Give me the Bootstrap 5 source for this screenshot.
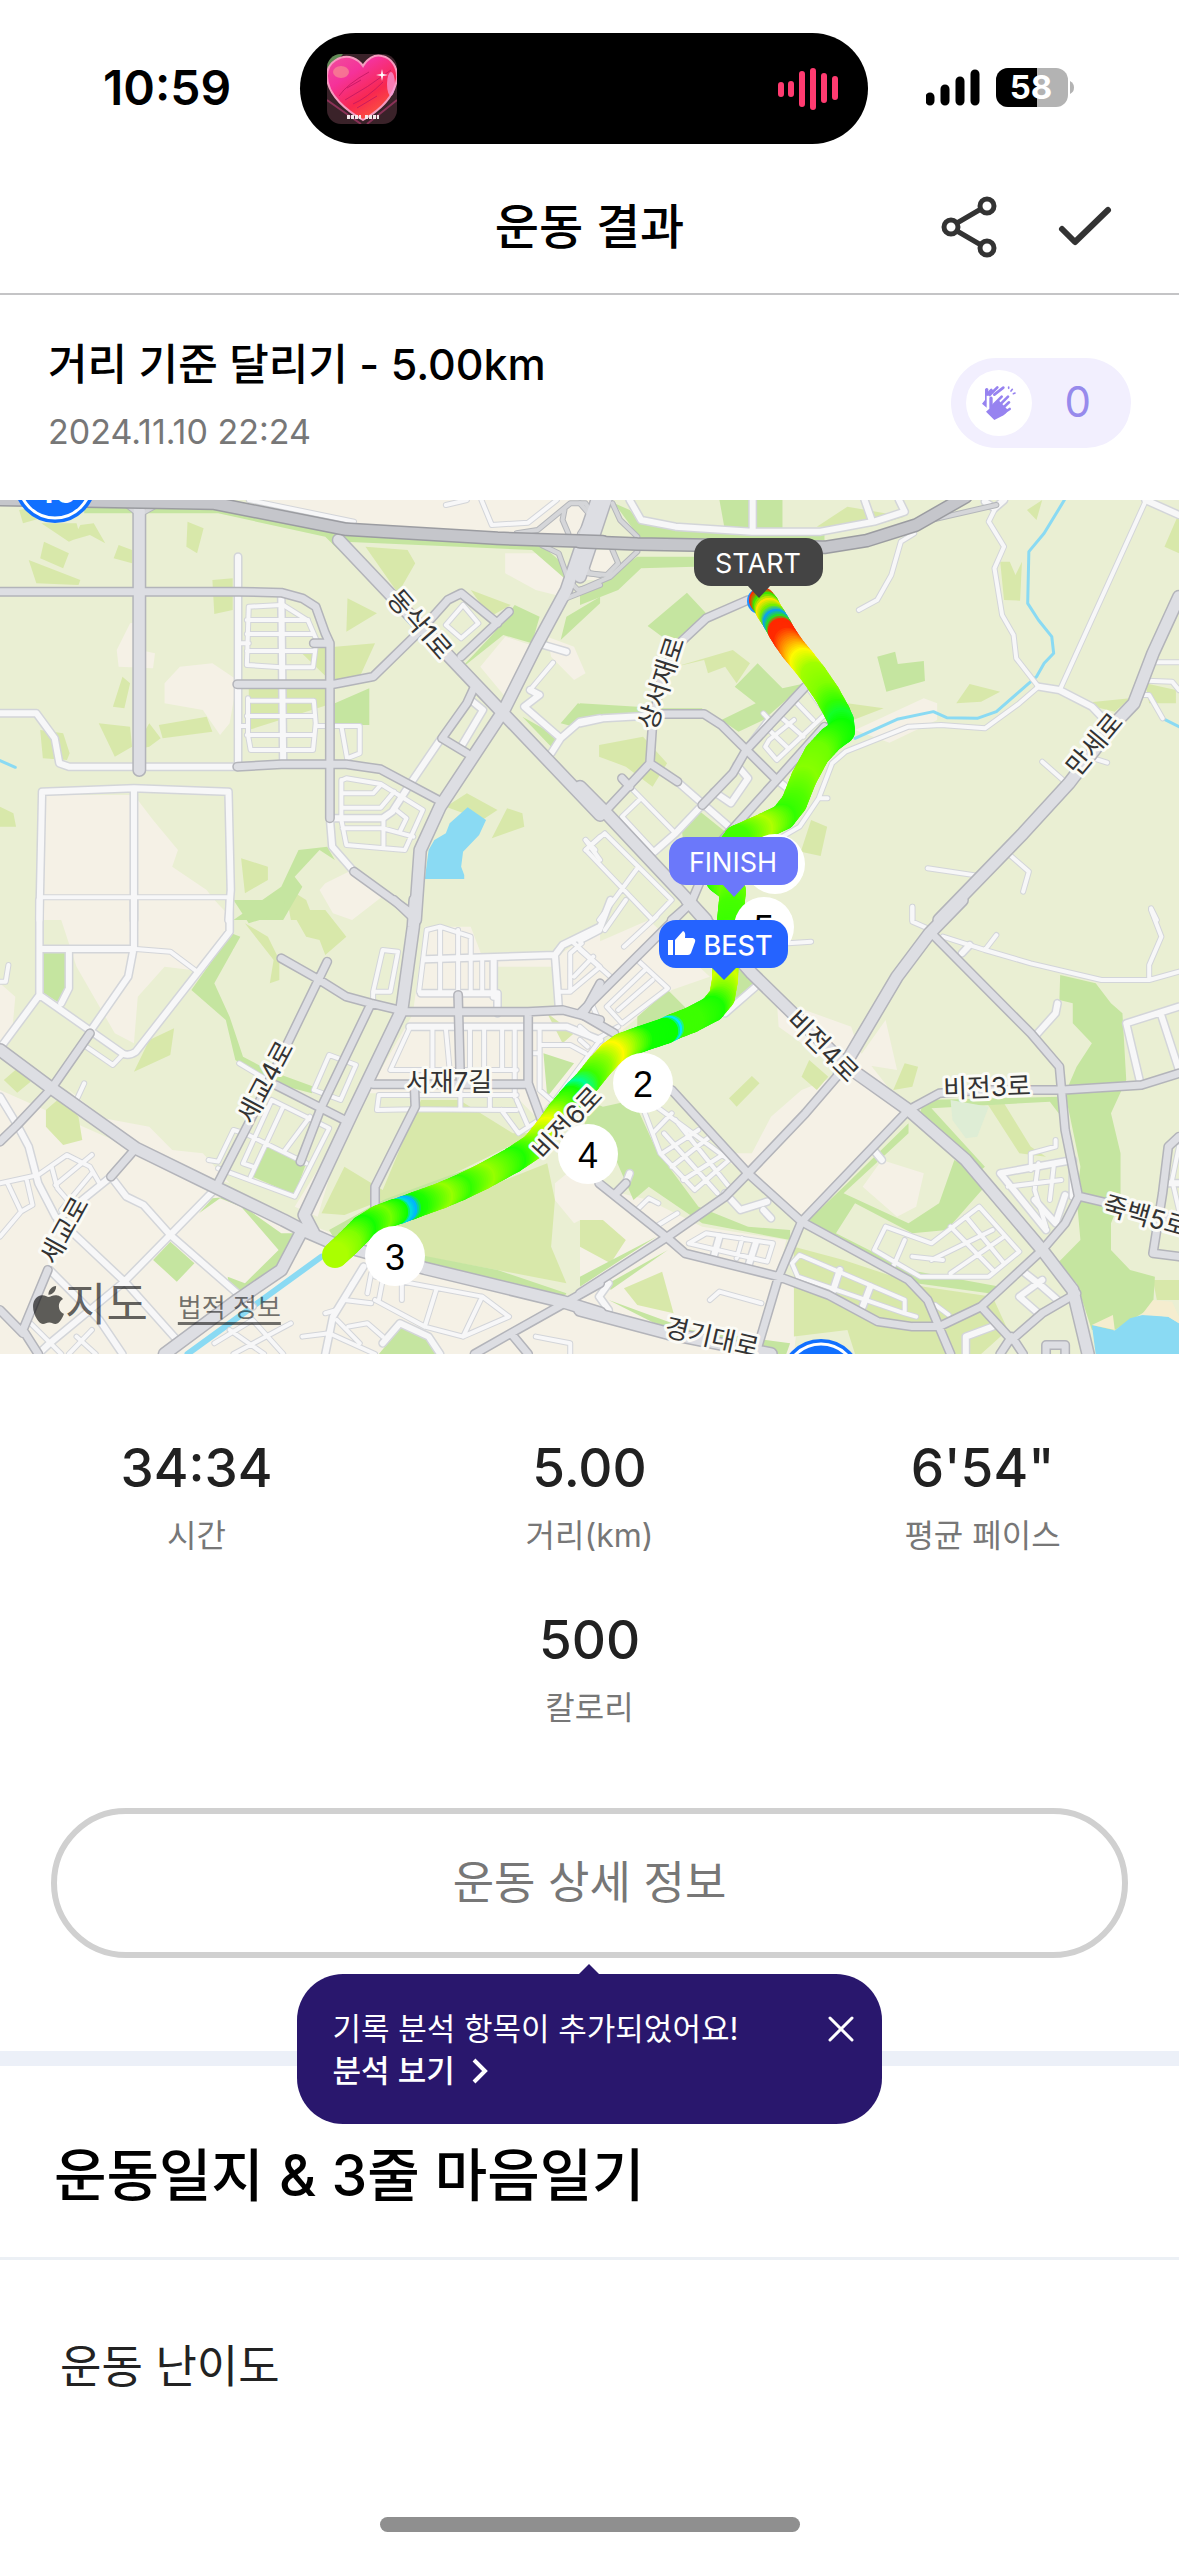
<!DOCTYPE html>
<html lang="ko">
<head>
<meta charset="utf-8">
<meta name="viewport" content="width=device-width, initial-scale=1">
<title>운동 결과</title>
<link href="https://cdn.jsdelivr.net/npm/bootstrap@5.3.0/dist/css/bootstrap.min.css" rel="stylesheet">
<style>
  body { font-family: Inter, "Noto Sans CJK KR", sans-serif; color: #000; background: #fff; line-height: 1.2; }
  button { font-family: inherit; }
  .status-bar { height: 147px; padding: 33px 103px 0; }
  .status-side { height: 42px; margin-top: 34px; }
  .clock { font-size: 48px; font-weight: 600; line-height: 42px; }
  .island { width: 568px; height: 111px; left: 50%; margin-left: -290px; top: 33px; background: #000; padding: 0 30px 0 27px; }
  .app-header { height: 148px; border-bottom: 2px solid #c4c4c6; }
  .app-title { font-size: 48px; font-weight: 500; padding-top: 13px; }
  .header-actions { right: 66px; top: 48px; gap: 56px; }
  .bare-btn { background: none; border: 0; padding: 0; line-height: 0; color: #333; }
  .run-info { height: 205px; padding: 0 48px; }
  .run-text { padding-bottom: 6px; }
  .run-title { font-size: 43px; font-weight: 500; line-height: 52px; }
  .run-date { font-size: 34px; line-height: 40px; color: #777; margin-top: 22px; }
  .cheer { width: 180px; height: 90px; margin-top: 10px; background: #f2effe; color: #978aec; border: 0; padding: 0 40px 0 15px; font-size: 42px; }
  .cheer-disc { width: 66px; height: 66px; background: #fff; }
  .run-map { aspect-ratio: 1179 / 854; overflow: hidden; }
  .run-map svg.map-art { width: 100%; height: 100%; display: block; }
  .map-art defs path, .tiles path { vector-effect: non-scaling-stroke; }
  .roads { fill: none; stroke-linecap: round; stroke-linejoin: round; }
  .map-labels text { font-size: 26px; fill: #333; stroke: #fbfbf6; stroke-width: 6px; stroke-linejoin: round; paint-order: stroke; text-anchor: middle; dominant-baseline: central; }
  .pins text { font-size: 27px; fill: #fff; text-anchor: middle; dominant-baseline: central; }
  .pins .km text { font-family: "Liberation Sans", sans-serif; font-size: 36px; fill: #000; }
  .map-credit { left: 32px; bottom: 20px; gap: 30px; color: rgba(0,0,0,.62); }
  .map-brand { font-size: 45px; line-height: 58px; }
  .map-credit a { font-size: 26px; padding-top: 5px; color: rgba(0,0,0,.55); text-decoration-thickness: 3px; text-underline-offset: 5px; }
  .run-stats { padding-top: 80px; row-gap: 28px; }
  .stat-value { font-size: 53px; font-weight: 500; line-height: 68px; color: #212121; }
  .stat-name { font-size: 32px; line-height: 44px; color: #777; margin-top: 12px; margin-bottom: 20px; }
  .detail-wrap { padding: 58px 51px 93px; }
  .detail-btn { height: 150px; border: 6px solid #d0d0d0; border-radius: 75px; background: #fff; color: #777; font-size: 45px; }
  .tip { width: 585px; height: 150px; left: 50%; margin-left: -293px; top: 224px; background: #29176d; color: #fff; border-radius: 46px; padding: 34px 28px 0 36px; font-size: 31px; line-height: 42px; z-index: 2; }
  .tip::before { content: ""; position: absolute; left: 50%; top: -10px; margin-left: -10px; border: 10px solid transparent; border-top: 0; border-bottom-color: #29176d; }
  .tip a { color: #fff; text-decoration: none; font-weight: 500; }
  .band { height: 15px; background: #ecf0f8; }
  .diary-title { font-size: 57px; font-weight: 500; line-height: 80px; padding: 70px 54px 41px; border-bottom: 3px solid #ecf0f5; }
  .effort { font-size: 45px; line-height: 60px; padding: 77px 60px; color: #222; }
  .home-bar { width: 420px; height: 15px; background: #8f8f8f; margin-bottom: 24px; }
</style>
</head>
<body>
<div class="d-flex flex-column min-vh-100">

  <div class="status-bar d-flex justify-content-between position-relative">
    <div class="status-side clock">10:59</div>
    <div class="island rounded-pill position-absolute d-flex align-items-center justify-content-between">
      <svg width="70" height="70" viewBox="0 0 70 70" role="img" aria-label="앨범 표지">
        <defs>
          <clipPath id="coverClip"><rect width="70" height="70" rx="14"/></clipPath>
          <linearGradient id="heartFill" x1="0" y1="0" x2=".7" y2="1"><stop offset="0" stop-color="#f0509c"/><stop offset=".35" stop-color="#f5329a"/><stop offset=".7" stop-color="#f8284f"/><stop offset="1" stop-color="#fb5a3c"/></linearGradient>
        </defs>
        <g clip-path="url(#coverClip)">
          <rect width="70" height="70" fill="#3a2229"/>
          <path d="M0 0H16L4 14 0 24z" fill="#5f8a55"/>
          <path d="M0 46L34 70M70 46L40 70" fill="none" stroke="#8a3257" stroke-width="2"/>
          <path d="M36 66C22 58 0 42 0 22 0 8 14 0 26 4 31 6 34 9 36 12 40 5 47 0 55 2 65 4 71 14 70 25 67 44 50 58 36 66z" fill="url(#heartFill)" stroke="#f59abf" stroke-width="2"/>
          <ellipse cx="14" cy="18" rx="8" ry="6" fill="#f88c92" opacity=".7"/>
          <ellipse cx="64" cy="30" rx="4" ry="12" fill="#f6a0e0" opacity=".7"/>
          <g fill="none" stroke="#c01560" stroke-width="1" opacity=".8"><path d="M12 42Q20 30 42 18M18 46Q40 34 64 16M26 50Q40 44 56 28M20 34L34 26M30 54L50 42"/></g>
          <path d="M55 15L56 20 61 21 56 22 55 27 54 22 49 21 54 20z" fill="#fff"/>
          <path d="M20 63H34M38 63H52" stroke="#f4e8ea" stroke-width="4" stroke-dasharray="3 1"/>
        </g>
      </svg>
      <svg width="60" height="44" viewBox="0 0 60 44" fill="none" stroke="#ff3b70" stroke-width="6" stroke-linecap="round" aria-hidden="true"><path d="M3 18V27M13 17V27M24 7V37M35 4V40M46 9V33M57 12V30"/></svg>
    </div>
    <div class="status-side d-flex align-items-center">
      <svg width="150" height="42" viewBox="926 67 150 42" role="img" aria-label="신호 4칸, 배터리 58%">
        <g stroke="#000" stroke-width="9" stroke-linecap="round"><path d="M930 97V101M945 89V101M960 81V101M975 74V101"/></g>
        <defs><clipPath id="cell"><rect x="996" y="68" width="72" height="39" rx="12"/></clipPath></defs>
        <g clip-path="url(#cell)"><rect x="996" y="68" width="72" height="39" fill="#b3b3b3"/><rect x="996" y="68" width="41" height="39"/></g>
        <path d="M1070 81Q1074 83 1074 87.500T1070 94z" fill="#b3b3b3"/>
        <text x="1031" y="99" font-size="33" font-weight="700" fill="#fff" text-anchor="middle">58</text>
      </svg>
    </div>
  </div>

  <header class="app-header position-relative text-center">
    <h1 class="app-title m-0 d-flex justify-content-center align-items-center h-100">운동 결과</h1>
    <div class="header-actions position-absolute d-flex align-items-center">
      <button class="bare-btn" type="button" aria-label="공유">
        <svg width="62" height="64" viewBox="939 195 62 64" fill="none" stroke="#333" stroke-width="5"><circle cx="951" cy="227" r="7"/><circle cx="987" cy="206" r="7"/><circle cx="987" cy="248" r="7"/><path d="M957 223L981 209M957 231L981 245"/></svg>
      </button>
      <button class="bare-btn" type="button" aria-label="완료">
        <svg width="56" height="44" viewBox="1058 206 56 44" fill="none" stroke="#333" stroke-width="6" stroke-linecap="round" stroke-linejoin="round"><path d="M1063 230L1076 243 1109 211"/></svg>
      </button>
    </div>
  </header>

  <section class="run-info d-flex justify-content-between align-items-center">
    <div class="run-text">
      <h2 class="run-title mb-0">거리 기준 달리기 - 5.00km</h2>
      <p class="run-date mb-0">2024.11.10 22:24</p>
    </div>
    <button class="cheer rounded-pill d-flex align-items-center justify-content-between" type="button" aria-label="응원 0">
      <span class="cheer-disc rounded-circle d-flex align-items-center justify-content-center">
        <svg width="36" height="36" viewBox="125 104 108 108" fill="none" stroke="#9783f0" stroke-width="8" stroke-linecap="round" stroke-linejoin="round" aria-hidden="true">
          <path d="M128 160L137 149V117Q142 109 147 116V136H142V172z" fill="#9783f0" stroke="none"/>
          <path d="M145 131L156 119M151 134L174 111M165 133L192 112"/>
          <path d="M150 142Q155 135 160 142V163L178 150 205 178Q204 190 184 199L165 209 140 184 150 175z" fill="#9783f0" stroke="none"/>
          <path d="M163 163L187 139M173 172L206 139M182 181L209 156M186 192L211 176"/>
          <path d="M208 110V114M215 122L219 117M222 130L227 128" stroke-width="5"/>
        </svg>
      </span>
      <span>0</span>
    </button>
  </section>

  <section class="run-map position-relative" aria-label="달린 경로 지도">
    <svg class="map-art" viewBox="0 500 1179 854">
      <defs>
        <g id="urban">
          <path transform="translate(0 490) scale(.3827 .3333)" d="M120 915H350L400 990 465 1080 450 1130 540 1200 600 1290H105zM340 400L365 395V480L405 490 400 535 310 530 305 480zM430 580L470 530 555 520 620 570 600 700 575 735 530 660 430 640zM650 30H1560V150L905 100zM1320 190L1420 190 1475 250 1470 320 1400 300 1320 250zM1255 530L1320 440 1400 470 1320 620zM1430 440L1500 470 1530 550 1500 570 1440 500zM850 1180L920 1140 1010 1210 920 1290 870 1270 835 1200z"/>
          <path transform="translate(580 490) scale(.382 .3333)" d="M720 720L900 625 935 640V690L810 758zM0 180H90V270H0z"/>
          <path transform="translate(0 900) scale(.3827 .3333)" d="M0 250L40 290 30 420 0 440zM110 0H560L610 60V150L500 210 430 200 360 290 350 430 300 400 250 300 200 200 160 60zM0 570L355 750 560 865 1110 1105 1568 1240V1362H0zM170 560L250 650 390 680 450 750 530 760 600 850 400 780zM1085 340H1568V440L1400 650 1340 580H960L1080 340zM1110 80L1230 80 1260 170 1460 165 1568 80V330H1450V200H1300V330H1080zM900 680L830 950 770 920zM1568 740L1450 850 1450 900 1500 970 1568 930z"/>
          <path transform="translate(580 900) scale(.382 .3333)" d="M0 150L180 60 340 230 240 270 100 400 0 400zM515 300L710 380 730 450 860 640 590 960 440 820 350 760 450 760 500 650 580 570 690 520 520 380zM790 780L900 820 880 920 830 950 740 860zM800 360L830 510 720 490zM0 850L180 900 320 980 540 1020 520 1120 580 1150 560 1362H0z"/>
        </g>
        <g id="fields">
          <path transform="translate(0 490) scale(.3827 .3333)" d="M108 100L200 100 210 140 180 155zM190 150L210 105 245 100 275 160 235 135zM115 155L180 190 165 235 105 205zM75 210L210 270 205 285 95 280zM490 95L532 115 515 190 487 170zM310 165L345 180V220L297 205zM955 170L1065 180 1085 220 1040 310zM555 270L608 265V360L560 372zM908 325L985 370 905 425zM1230 300L1335 345 1280 380zM320 560L340 580 325 655 295 650zM258 700L340 710 345 770 300 800zM390 700L420 745 390 770 350 780zM415 705L540 680 555 725 425 745zM105 720L165 730 182 790 175 810 112 805zM0 950L35 970 42 1010H0zM1165 950L1220 910 1300 960 1260 990zM1325 955L1365 970 1370 1010 1285 1045zM630 1105L700 1130V1170L640 1210zM780 480L980 460 940 560 870 580zM650 590L870 590V640L650 720zM745 1190L800 1230 820 1290H760zM50 60L100 50 120 80 60 100z"/>
          <path transform="translate(580 490) scale(.382 .3333)" d="M250 530L400 480 445 520 410 580 380 530 335 550 325 510zM985 640L1020 582 1100 605 1050 635zM50 765L165 740 228 820 190 890 120 830 50 800zM1100 215L1125 215 1140 255 1157 215 1152 332 1110 330zM700 640L795 655 715 690zM605 990L647 1010 630 1098 578 1085zM1480 580L1560 600V640H1490zM620 110L700 50 850 80 760 110zM1310 640L1440 625 1400 665zM1170 60L1210 30 1195 90zM1530 170L1568 70V190z"/>
          <path transform="translate(0 900) scale(.3827 .3333)" d="M350 515L390 420 455 385 445 465zM120 630L160 590 205 650 215 720 165 735 120 680zM10 540L50 500 80 545 45 578zM640 70L700 110 730 180V240L705 250 715 180zM760 30L850 30 905 110 850 165 835 120 800 110zM1100 600H1200L1340 700 1400 700 1100 870 1000 900 900 945 840 940 900 800 1000 870 1080 650zM990 990L1430 790 1450 900 1440 1040 1480 1150 1300 1110 1060 1060zM1430 340L1500 400 1470 430z"/>
          <path transform="translate(580 900) scale(.382 .3333)" d="M390 595L450 528 470 550 410 620zM600 480L650 530 620 570 580 530zM850 490L885 500 870 560 820 570zM1060 600L1110 610 1180 740 1220 770 1150 760zM115 1165L215 1115 245 1240 150 1215zM560 1040L690 1080 900 1160 1080 1190 1120 1290 1050 1362H720L700 1290 560 1310zM0 960L60 960 120 1020 80 1090 0 1040zM1500 1140H1568V1200H1510z"/>
        </g>
        <g id="parks">
          <path transform="translate(0 490) scale(.3827 .3333)" d="M220 40H570L860 120 1400 150 1500 250 1480 270 1390 180 900 155 1010 300 990 300 850 140 570 70H220zM1200 540L1290 430 1345 345 1410 380 1390 460 1315 435zM875 640L965 595V705H875zM610 1290L735 1190 780 1080 855 1070 875 1110 835 1080 770 1160 790 1190 740 1290zM1465 450L1568 340V320L1480 380zM1365 680L1465 745 1440 770zM1465 700L1510 640 1568 660 1500 710z"/>
          <path transform="translate(580 490) scale(.382 .3333)" d="M90 40L130 60 160 100 450 130 640 130V150H160zM365 30H530V125H380zM0 310L150 200H300V230L160 235 100 300 0 345zM280 308L330 370 250 450 215 440 177 408zM465 520L530 595 590 580 480 690 415 725 370 690 460 640 405 590zM778 500L825 485 832 522 900 513 903 573 802 605zM265 1010L315 965 385 1030 350 1080 270 1050zM0 640L215 655H320V665L0 690z"/>
          <path transform="translate(0 900) scale(.3827 .3333)" d="M610 0H745L735 40 650 70zM605 100L628 110 560 250 600 350 635 470 700 510 820 560 815 580 700 545 615 480 590 360 500 270zM113 155H170V265L150 305 115 280zM700 735L800 790 770 885 660 830zM445 1025L508 1090 462 1145 400 1080zM520 940L555 895 600 890 735 1000 790 1000 735 1110 640 1190 600 1170 595 1130 640 1150 728 1050 630 920 575 895zM860 990L1000 900 1380 740 1350 790 1000 960 880 1030zM1420 460L1500 490 1430 590zM1030 1050L1300 1110 1480 1180 1470 1200 1100 1100zM990 1362L1050 1280 1130 1320 1160 1362z"/>
          <path transform="translate(580 900) scale(.382 .3333)" d="M60 620L0 590 20 720 60 690 140 900 180 860 320 970 550 1020V990L440 980 310 920 200 750 140 600zM590 970L700 850 860 670V700L690 880 860 970 940 910 980 780 1075 840 960 990 870 1000 720 910 670 1000 860 1110 1100 1160 1070 1180 880 1150zM1257 225L1350 250 1390 310 1420 340 1430 540 1390 640 1415 760V900L1390 970V1050L1440 1110 1505 1130 1500 1220 1400 1290H1340L1300 1150 1250 1090 1310 1020 1300 890 1310 800 1270 580 1300 500 1340 430 1290 370V310L1255 300zM150 350L230 270 300 350 150 400zM405 205H440L460 260 380 320zM890 640L900 600 1260 590V650L1230 605 920 625 1060 800 1050 810zM0 1130L200 1010 0 1160zM75 1150L230 1050 80 1170zM75 1200L170 1240 290 1290 550 1330 540 1362H500L230 1290z"/>
        </g>
        <g id="mainRoads">
          <path transform="translate(0 490) scale(.3827 .3333)" d="M364 40V840M885 150L1240 580 1568 975M1560 30L1480 300 1400 470 1317 660 1150 950 1098 1080 1085 1290"/>
          <path transform="translate(580 490) scale(.382 .3333)" d="M70 20L0 260M1568 320L1500 490 1450 640 1400 700 1280 880 1160 1030 940 1290M0 890L65 965 290 1240 330 1290"/>
          <path transform="translate(0 900) scale(.3827 .3333)" d="M1085 0L1080 80 1050 330 920 640 795 945 820 1000M0 450L135 565 355 745 560 860 740 960 790 990 870 1030 1110 1105 1470 1205 1568 1240M790 990L735 1110 620 1200 430 1362"/>
          <path transform="translate(580 900) scale(.382 .3333)" d="M280 0L450 220 700 500 860 630 1010 780 1210 1050 1290 1170 1330 1362M1000 0L915 100 830 230 680 520M0 1230L230 1300 500 1362"/>
        </g>
        <g id="sideRoads">
          <path transform="translate(0 490) scale(.3827 .3333)" d="M0 305H625L735 308 790 325 825 350 850 430 862 460V985M820 460H862M620 583H870L975 560 1100 420 1170 330 1205 310 1300 400M1205 500L1330 365M620 830L735 823H905L995 838 1145 930M1240 590L1220 640 1155 745 1220 790M925 1145L1075 1270"/>
          <path transform="translate(580 490) scale(.382 .3333)" d="M440 330L330 385 260 460 215 550 190 700 183 820 255 875M65 965L183 820M110 865L130 890M215 672H325L370 705 515 870M590 590L435 780 400 850 320 945M640 710L515 870 350 1080 290 1240 240 1290"/>
          <path transform="translate(0 900) scale(.3827 .3333)" d="M0 725L45 675 135 565 235 400M355 745L290 830M735 175L835 240 905 290 970 310 1060 335H1380L1470 330 1568 360M855 185L650 670 565 860M970 310L840 620 785 785M720 555L900 660M975 553H1380M1197 285L1203 550M1380 340V550L1415 660M1083 560L1085 620 980 860V930M125 1110L60 1290 100 1362M0 1230L60 1300M1030 0L1085 60M1568 1150L1335 1300 1240 1362M1335 1300L1380 1362M1568 250L1530 330"/>
          <path transform="translate(580 900) scale(.382 .3333)" d="M680 520L590 640 440 820M860 630L580 965 520 1130 460 1362M920 100L1180 400 1255 500 1270 690 1305 890 1270 970 1210 1050 1050 1220 940 1280H870L780 1265 650 1185 520 1130 275 1060 225 1010 50 850M860 630L940 580 1060 570H1265L1470 555 1568 520M240 570L440 820 580 965 860 1140 910 1200 970 1362M440 820L380 890 230 1010 0 1180M1310 890L1568 960M1568 710L1540 740 1525 880 1500 1060 1568 1070M1050 1220L1130 1320 1210 1240 1300 1180M1100 1362L1130 1310 1160 1362M90 885L120 850M280 20L0 340 90 400M1220 1362V1335H1270V1362"/>
        </g>
        <g id="ramps">
          <path transform="translate(0 490) scale(.3827 .3333)" d="M1350 130L1405 120 1490 40H1530L1550 75M1475 60L1470 90 1485 130M1415 165L1460 190 1485 270 1510 300 1568 285M1480 325L1568 285M1530 180V230L1540 250 1568 255M320 35L364 75 410 45"/>
          <path transform="translate(580 490) scale(.382 .3333)" d="M85 40L105 90 150 140M0 300L80 260 150 185M20 250L70 255 100 220 85 180M880 100L1090 45M0 40L30 80 0 130"/>
        </g>
        <g id="streets">
          <path transform="translate(0 490) scale(.3827 .3333)" d="M622 200V830H180L155 820 143 745 95 670H0M735 310L740 820M862 985L868 1070 925 1145M103 1290L110 905 350 895 597 905 603 1200 597 1290M350 895V1290M1150 750L1070 885 1025 965 1000 985H865M1230 630L1262 660 1205 770M1420 465L1480 485M1370 650L1465 745 1440 790M1465 745L1515 695 1568 685M1370 650L1410 615 1385 600"/>
          <path transform="translate(580 490) scale(.382 .3333)" d="M130 30L160 90 250 110 450 125H630L770 95 850 65 835 30M452 30V125M745 30L765 95M0 700L60 685 215 675M320 945L250 1030 195 1085M255 875L390 1010M435 780L495 690M1480 30L1568 75M1110 30L1085 55 1060 35M1200 590L1255 600 1340 650 1365 680M515 870L560 910M410 825L440 865 395 940 350 905"/>
          <path transform="translate(0 900) scale(.3827 .3333)" d="M103 0V285L0 445M350 0V140L335 230 235 395M600 0V95L515 220 355 455Q335 470 320 460L103 285M103 147H350M180 150V265L160 310M290 830L150 960M290 830L330 890 375 915 445 1005 660 1220M560 870L445 1005 325 1145 130 1330 100 1362M0 590L45 675 75 740 100 850 145 950 210 1020 330 1150 470 1330M1070 380H1480L1568 420M1110 178L1450 165 1470 135 1568 80M1450 165L1460 320M1100 280H1300V340M1290 180V290M950 1100L870 1250 850 1362M1000 1330L1045 1270 1120 1310 1150 1362M130 1110L260 1260 320 1362"/>
          <path transform="translate(580 900) scale(.382 .3333)" d="M130 820L120 850M1190 410L1245 340 1250 310M1430 370L1568 320M1430 370L1465 540M1520 340L1568 510M1000 160L1020 135M765 745L790 780M460 260L380 340M380 880L420 930 490 905M480 930L500 955M75 1150L50 1190 75 1230M1100 820L1290 780M1100 820L1220 990M1290 780V890M1270 885L1245 970 1190 900M1155 1110L1210 1160 1250 1200M1200 1240L1150 1190 1210 1140M1010 1362V1310L1080 1280M1540 850H1568M350 1070L365 1010M440 1100L460 1030M660 1180L680 1110M740 1220L760 1160M0 120L50 90 80 0"/>
        </g>
        <g id="lanes">
          <path transform="translate(0 490) scale(.3827 .3333)" d="M105 1222H600M735 345L650 350 645 525 735 532H818L827 450 805 392 740 345M645 390H805M645 432H820M645 483H822M622 460H650M648 625V735L655 780H818L825 700 820 632H648M645 678H822M645 735H822M622 708H645M825 708H940V790L907 805 893 715M895 870L905 865 995 882 1105 960 1058 1080 905 1065 892 990V870M895 910H975L995 885M895 953H995L1030 905M895 1015H1000L1080 1040M1002 985V1068M1035 960L1062 985 1045 1025M1445 518L1385 600M1165 405L1210 345 1250 400 1205 445 1165 405M1165 45L1220 30M1258 30L1285 105 1380 98 1455 30M650 30L925 95M1530 1050L1568 1110M1530 1080L1568 1040"/>
          <path transform="translate(580 490) scale(.382 .3333)" d="M1085 60L1070 95 1110 170 1085 235 1105 375 1135 435 1142 505 1200 590 1150 640 1060 715 945 705 860 710 695 785 660 820 625 925 575 1010 530 1040M625 925H648M1480 35L1258 595M875 130L840 155 815 255 778 330 730 360M1505 517H1568M1485 572L1550 575 1568 600M1460 615H1490L1525 685M1210 815L1262 868M1330 800L1380 818M910 1135L1040 1157M1120 1090L1175 1145 1160 1205M870 1250V1290M1495 1255L1510 1290M135 895L250 1030M155 930L110 980 195 1085M65 1030L15 1080 190 1290 240 1230 65 1030M150 1135L50 1290M15 1050L40 1080M595 590L645 670 515 810 485 770 495 750 560 690M560 630L610 690M525 680L585 740M495 720L545 775M480 670L500 695"/>
          <path transform="translate(0 900) scale(.3827 .3333)" d="M355 147L445 155 515 215M225 440L295 495 320 465M200 600L220 550M0 245H15L22 195M975 310V275H1020L1040 155 1000 150 975 275M1115 90L1150 80 1230 110V280M1115 90L1095 275M1150 80V280M1197 90V280M1260 180V280M820 570L860 465 930 495 890 600 820 570M625 490L720 555M710 600L860 685 770 890 570 805M710 600L635 790 660 800M740 620L655 830M810 650L745 750M640 700L800 790M545 780L570 785 610 690 640 700M985 630L1080 628 1350 630M990 585H1350M985 630L990 585M1203 550V630M1280 590V630M1310 630L1355 700 1415 655M1350 600L1380 680M1070 385L1020 510H1350M1130 385V510M1165 385L1175 510M1228 385V510M1265 385V510M1312 385V510M1345 385V590M1410 385V570L1440 600M1410 435H1490L1530 460M1390 460H1410M1568 420L1415 655M0 850L100 825 175 765 235 800 260 850M20 850L55 935 85 915 70 840M55 935L0 1010M145 855L240 765M135 800L150 865 180 905M160 930L240 820M1460 275H1490L1568 200M1490 275V160L1520 130M1500 130L1568 200M1500 230L1550 170M610 1362L760 1270M560 1330L660 1260 740 1362M600 1290L690 1362M850 1240L880 1230M790 1310L860 1300 980 1362M920 1150L900 1200 970 1210M970 1120L960 1180M1000 1140L990 1200M1050 1140V1200M1110 1280L1210 1310 1260 1190 980 1130M980 1200L1110 1280 1140 1170M1260 1190L1330 1250 1210 1310M910 1280L960 1270 1000 1310M880 1260L940 1330M80 1270L160 1362M240 1290L180 1362M200 1310L250 1362M1400 1310L1490 1330V1362"/>
          <path transform="translate(580 900) scale(.382 .3333)" d="M870 20V65L920 90M950 110L1060 150 1180 190 1365 240H1490L1568 215M1060 150L1090 105M1490 240V195L1522 110 1495 30M545 130L605 125M1180 810V760L1245 740V720M1120 860L1260 840M1200 790L1190 870 1220 980M1240 800L1230 900M170 640L210 760 300 870 390 780 200 620M190 700L240 640M215 760L310 690M240 800L340 710M270 840L380 760M220 700L360 880M250 660L390 860M285 1030L330 1000 505 1030 490 1085 285 1030M410 1075L425 1015M555 1090L575 1065 850 1200V1240L570 1130 555 1090M850 1240L880 1250M340 1200L365 1175 475 1210M770 1050L800 980 920 1030 1045 920 1150 1055 1070 1130H890L770 1050M970 980L1080 1110M1010 950L1110 1090M850 1020L820 1100M920 1080L1080 990M970 1120L1110 1010M870 1070L950 1080M140 940L180 895 205 910M205 975L255 940M930 1215L965 1245M1568 740L1550 840 1568 930M65 90L120 0M0 150L80 230M115 140L200 50M150 180L230 265 110 370 70 320 170 210M100 330L190 240M45 350L30 310 140 180M0 380L40 420 100 380M0 420L20 440"/>
        </g>
        <g id="highway">
          <path transform="translate(0 490) scale(.3827 .3333)" d="M-20 28L560 40 905 118 1300 145 1575 155"/>
          <path transform="translate(580 490) scale(.382 .3333)" d="M0 155L150 162 640 172 750 152 880 105 1010 20"/>
        </g>
      </defs>
      <rect y="500" width="1179" height="854" fill="#eaefd3"/>
      <g class="tiles">
        <use href="#urban" fill="#f5f1e6"/>
        <use href="#fields" fill="#d8e8aa"/>
        <use href="#parks" fill="#c5e5a0"/>
        <g fill="#8adaf3">
          <path transform="translate(0 490) scale(.3827 .3333)" d="M1222 952L1270 990 1252 1035 1210 1085 1205 1130 1213 1155V1167H1110L1120 1080 1135 1050 1165 1030 1175 1000z"/>
          <path transform="translate(580 900) scale(.382 .3333)" d="M1340 1275L1400 1292 1440 1255 1480 1243 1540 1250 1568 1270V1362H1350z"/>
        </g>
        <g transform="translate(580 900) scale(.382 .3333)"><path fill="#f5edcf" d="M1340 1275L1395 1245 1400 1290zM1470 1245L1500 1200 1550 1205 1568 1250V1270L1540 1250z"/><path fill="#deedd5" d="M970 600L1070 620 1040 710 1010 715 975 660z"/></g>
        <g class="roads" stroke="#8adaf3" stroke-width="3">
          <path transform="translate(0 490) scale(.3827 .3333)" d="M0 812L40 832"/>
          <path transform="translate(580 490) scale(.382 .3333)" d="M1268 30L1215 130 1175 185 1172 340 1200 390 1235 440 1240 490 1215 520 1195 560 1090 665 1040 685 960 683 925 665 830 688 720 745M1525 685L1568 710"/>
          <path transform="translate(0 900) scale(.3827 .3333)" stroke-width="6" d="M840 1070L490 1362"/>
        </g>
        <g class="roads">
          <use href="#lanes" stroke="#d3d5d9" stroke-width="6"/><use href="#streets" stroke="#d3d5d9" stroke-width="9"/>
          <use href="#lanes" stroke="#f7f7f8" stroke-width="4"/><use href="#streets" stroke="#f7f7f8" stroke-width="6"/>
          <use href="#ramps" stroke="#b4b6ba" stroke-width="6"/><use href="#sideRoads" stroke="#b3b4ba" stroke-width="10"/><use href="#mainRoads" stroke="#b3b4ba" stroke-width="14"/>
          <use href="#ramps" stroke="#d5d6d9" stroke-width="4"/><use href="#sideRoads" stroke="#dddee3" stroke-width="7"/><use href="#mainRoads" stroke="#dddee3" stroke-width="11"/>
          <use href="#highway" stroke="#9b9ca1" stroke-width="14"/><use href="#highway" stroke="#c5c6cb" stroke-width="11"/>
        </g>
      </g>

      <g id="route"></g>

      <g fill="#1170ff" stroke="#1170ff" stroke-width="2">
        <circle cx="55" cy="482" r="40"/><circle cx="55" cy="482" r="36" stroke="#fff" stroke-width="3"/>
        <circle cx="821" cy="1380" r="40"/><circle cx="821" cy="1380" r="36" stroke="#fff" stroke-width="3"/>
      </g>
      <text x="55" y="503" font-size="32" font-weight="700" fill="#fff" text-anchor="middle">45</text>

      <g class="map-labels">
        <text transform="translate(420 624) rotate(49)">동삭1로</text>
        <text transform="translate(661 683) rotate(-72)">상서재로</text>
        <text transform="translate(1094 744) rotate(-50)">만세로</text>
        <text transform="translate(449 1081)">서재7길</text>
        <text transform="translate(265 1082) rotate(-62)">세교4로</text>
        <text transform="translate(64 1230) rotate(-61)">세교로</text>
        <text transform="translate(567 1123) rotate(-47)">비전6로</text>
        <text transform="translate(823 1046) rotate(45)">비전4로</text>
        <text transform="translate(987 1087) rotate(-2)">비전3로</text>
        <text transform="translate(1146 1216) rotate(16)">죽백5로</text>
        <text transform="translate(712 1337) rotate(13)">경기대로</text>
      </g>

      <g class="pins">
        <g class="km">
          <circle cx="775" cy="864" r="30" fill="#fff"/>
          <circle cx="764" cy="927" r="30" fill="#fff"/><text x="764" y="928">5</text>
          <circle cx="643" cy="1083" r="30" fill="#fff"/><text x="643" y="1084">2</text>
          <circle cx="588" cy="1154" r="30" fill="#fff"/><text x="588" y="1155">4</text>
          <circle cx="395" cy="1256" r="30" fill="#fff"/><text x="395" y="1257">3</text>
        </g>
        <rect x="694" y="538" width="129" height="48" rx="17" fill="#444"/><path d="M747 585H771L759 598z" fill="#444"/><text x="758" y="563">START</text>
        <rect x="669" y="837" width="129" height="48" rx="17" fill="#6b78fa"/><path d="M722 884H746L734 897z" fill="#6b78fa"/><text x="733" y="862">FINISH</text>
        <rect x="659" y="920" width="129" height="48" rx="17" fill="#2563ff"/><path d="M711 967H737L724 980z" fill="#2563ff"/>
        <text x="738" y="945" font-weight="500">BEST</text>
        <path d="M668 940H673V955H668zM675 940L683 931Q686 932 685 938H693Q696 939 695 942L691 953Q690 955 688 955H675z" fill="#fff"/>
      </g>
    </svg>
    <div class="map-credit position-absolute d-flex align-items-center">
      <span class="map-brand d-flex align-items-center">
        <svg width="33" height="38" viewBox="2 0 20 24" fill="#000" fill-opacity=".62" aria-label="Apple" role="img"><path d="M12.152 6.896c-.948 0-2.415-1.078-3.960-1.040-2.040.027-3.910 1.183-4.961 3.014-2.117 3.675-.546 9.103 1.519 12.090 1.013 1.454 2.208 3.090 3.792 3.039 1.520-.065 2.090-.987 3.935-.987 1.831 0 2.350.987 3.960.948 1.637-.026 2.676-1.480 3.676-2.948 1.156-1.688 1.636-3.325 1.662-3.415-.039-.013-3.182-1.221-3.220-4.857-.026-3.040 2.480-4.494 2.597-4.559-1.429-2.090-3.623-2.324-4.390-2.376-2-.156-3.675 1.090-4.610 1.090zM15.530 3.830c.843-1.012 1.400-2.427 1.245-3.830-1.207.052-2.662.805-3.532 1.818-.780.896-1.454 2.338-1.273 3.714 1.338.104 2.715-.688 3.559-1.701"/></svg>
        <span>지도</span>
      </span>
      <a href="#legal">법적 정보</a>
    </div>
  </section>

  <section class="run-stats row g-0 text-center justify-content-center">
    <div class="col-4"><div class="stat-value">34:34</div><div class="stat-name">시간</div></div>
    <div class="col-4"><div class="stat-value">5.00</div><div class="stat-name">거리(km)</div></div>
    <div class="col-4"><div class="stat-value">6'54"</div><div class="stat-name">평균 페이스</div></div>
    <div class="col-4"><div class="stat-value">500</div><div class="stat-name">칼로리</div></div>
  </section>

  <div class="detail-wrap position-relative">
    <button class="detail-btn w-100" type="button">운동 상세 정보</button>
    <div class="tip position-absolute d-flex justify-content-between align-items-start" role="status">
      <div>
        <div>기록 분석 항목이 추가되었어요!</div>
        <a href="#analysis" class="d-inline-flex align-items-center gap-3">분석 보기
          <svg width="18" height="26" viewBox="0 0 18 26" fill="none" stroke="#fff" stroke-width="4" aria-hidden="true"><path d="M3 2L14 13 3 24"/></svg></a>
      </div>
      <button class="bare-btn" type="button" aria-label="닫기">
        <svg width="26" height="42" viewBox="0 0 26 42" fill="none" stroke="#fff" stroke-width="3" stroke-linecap="round"><path d="M2 10L24 32M24 10L2 32"/></svg>
      </button>
    </div>
  </div>

  <div class="band"></div>
  <h2 class="diary-title mb-0">운동일지 &amp; 3줄 마음일기</h2>
  <h3 class="effort mb-0 fw-normal">운동 난이도</h3>

  <div class="home-bar rounded-pill mx-auto mt-auto"></div>
</div>

<script src="https://cdn.jsdelivr.net/npm/bootstrap@5.3.0/dist/js/bootstrap.bundle.min.js"></script>
<script>
  // Pace-coloured track: x, y and [r, g, b] at each sample, blended between samples.
  const track = [
    [762,600,255,42,0],[766,605,60,230,0],[769,611,255,225,0],[773,617,120,240,0],[776,622,10,160,240],[779,627,40,220,40],[781,631,255,40,0],[786,639,255,42,0],
    [793,649,255,130,0],[803,661,255,250,0],[814,675,160,255,0],[827,694,130,255,0],[837,712,50,255,0],[841,721,20,255,40],[842,731,10,255,0],
    [831,739,40,255,0],[817,754,110,255,0],[804,778,135,255,0],[794,803,80,255,0],[783,817,50,255,0],[760,828,175,255,0],[737,838,70,255,0],
    [724,855,60,255,0],[719,880,40,255,0],[733,891,110,255,0],[731,910,70,255,0],[729,930,60,255,0],[726,955,130,255,0],[725,980,210,255,0],
    [722,997,130,255,0],[712,1009,25,255,0],[691,1020,60,255,0],[673,1027,60,255,0],[669,1029,0,230,255],[665,1031,10,255,0],[641,1039,15,255,0],
    [622,1046,160,255,0],[611,1054,255,250,0],[599,1067,145,255,0],[587,1082,60,255,0],[577,1092,0,255,150],[571,1099,20,255,0],[560,1112,100,255,0],
    [547,1130,240,255,0],[534,1146,150,255,0],[513,1160,30,255,0],[482,1177,150,255,0],[459,1188,50,255,0],[440,1196,150,255,0],[415,1205,30,255,0],
    [410,1207,20,255,0],[404,1209,0,180,255],[399,1211,0,220,220],[395,1212,15,255,0],[379,1218,115,255,0],[363,1228,20,255,0],[348,1243,130,255,0],[335,1255,170,255,0]
  ];
  const ns = 'http://www.w3.org/2000/svg', route = document.getElementById('route');
  const dot = (x, y, r, c) => {
    const e = document.createElementNS(ns, 'circle');
    e.setAttribute('cx', x); e.setAttribute('cy', y); e.setAttribute('r', r); e.setAttribute('fill', c);
    route.appendChild(e);
  };
  dot(760, 601, 13, '#1e90ff');
  for (let i = 0; i < track.length - 1; i++) {
    const a = track[i], b = track[i + 1];
    const n = Math.max(1, Math.round(Math.hypot(b[0] - a[0], b[1] - a[1]) / 2));
    for (let k = 0; k <= n; k++) {
      const m = a.map((v, j) => v + (b[j] - v) * k / n);
      dot(m[0], m[1], 13, `rgb(${m.slice(2).map(Math.round).join(',')})`);
    }
  }
</script>
</body>
</html>
